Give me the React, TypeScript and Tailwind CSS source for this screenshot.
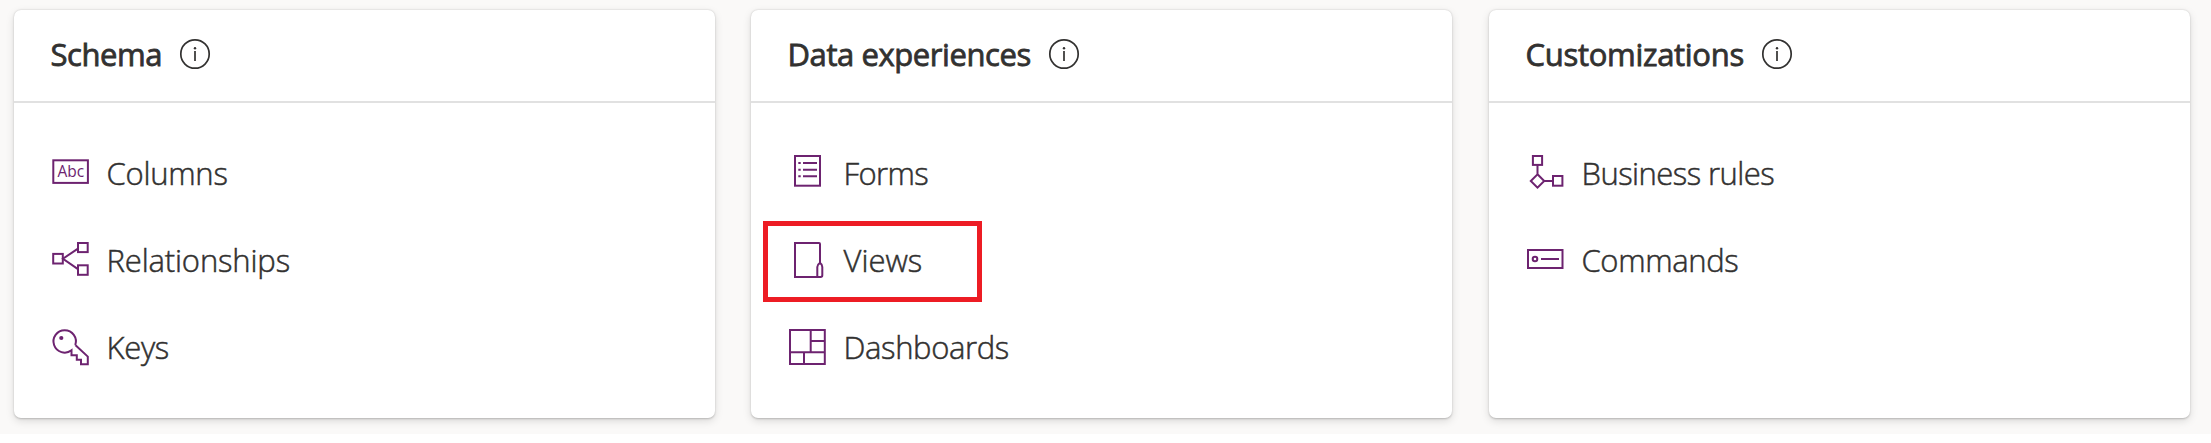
import type { ReactNode } from 'react';

function Icon({ children }: { children: ReactNode }) {
  return (
    <svg
      className="mt-[23px] h-10 w-10 shrink-0 text-[#6d2370]"
      viewBox="0 0 40 40"
      fill="none"
      stroke="currentColor"
      strokeWidth="2"
    >
      {children}
    </svg>
  );
}

function ColumnsIcon() {
  return (
    <Icon>
      <rect x="3.3" y="7.3" width="34.6" height="22.6" />
      <text
        className="font-['Open_Sans',sans-serif] text-[15.5px]"
        x="7.6"
        y="24.4"
        textLength="26.6"
        fill="currentColor"
        stroke="none"
      >
        Abc
      </text>
    </Icon>
  );
}

function RelationshipsIcon() {
  return (
    <Icon>
      <rect x="3.2" y="13.9" width="9.6" height="9.6" />
      <rect x="28" y="3" width="9.7" height="9.1" />
      <rect x="28" y="25.3" width="9.7" height="9.5" />
      <path d="M27.6 8.8 13 18.7l14.6 10.2" />
    </Icon>
  );
}

function KeysIcon() {
  return (
    <Icon>
      <path d="M25.3 18A11.2 11.2 0 1 0 21.5 23.3V28.3H26.8V32.7H31V37.2H37.8V29.6L25.3 18" />
      <circle cx="11.3" cy="11" r="2.1" fill="currentColor" stroke="none" />
    </Icon>
  );
}

function FormsIcon() {
  return (
    <Icon>
      <rect x="8" y="3" width="25" height="29.7" />
      <path d="M11.3 10h2.4M16 10h14M11.3 16.7h2.4M16 16.7h14M11.3 23.3h2.4M16 23.3h14" />
    </Icon>
  );
}

function ViewsIcon() {
  return (
    <Icon>
      <path d="M33 22.8V4a1 1 0 0 0-1-1H8v34h25.6a1.7 1.7 0 0 0 1.7-1.7V27c0-1.7-.9-3.3-2.3-4.2-1.4.9-2.7 2.5-2.7 4.2v10" />
    </Icon>
  );
}

function DashboardsIcon() {
  return (
    <Icon>
      <rect x="3" y="3" width="34.8" height="34" />
      <path d="M23.7 3v22.3M23.7 14h14M3 25.3h34.8M17 25.3V37" />
    </Icon>
  );
}

function BusinessRulesIcon() {
  return (
    <Icon>
      <rect x="7.9" y="3" width="9.2" height="8.9" />
      <path d="M12.5 12v9M19 28h8.5M12.5 21.3 19.2 28l-6.7 6.7L5.8 28z" />
      <rect x="28" y="23" width="9.4" height="9.7" />
    </Icon>
  );
}

function CommandsIcon() {
  return (
    <Icon>
      <rect x="3" y="10" width="34.5" height="18" />
      <circle cx="10" cy="19" r="2.3" />
      <path d="M16 19h18" />
    </Icon>
  );
}

function InfoIcon() {
  return (
    <svg
      className="mt-7 h-8 w-8 shrink-0 text-[#323130]"
      viewBox="0 0 32 32"
      fill="none"
      stroke="currentColor"
      strokeWidth="1.7"
    >
      <circle cx="16" cy="16" r="14.2" />
      <path d="M16 13v10" />
      <circle cx="16" cy="10.2" r="1.2" fill="currentColor" stroke="none" />
    </svg>
  );
}

interface ItemData {
  label: string;
  tracking: string;
  icon: ReactNode;
  highlighted?: boolean;
}

interface CardData {
  title: string;
  tracking: string;
  margin: string;
  items: ItemData[];
}

const cards: CardData[] = [
  {
    title: 'Schema',
    tracking: 'tracking-[-0.45px]',
    margin: 'ml-[14px]',
    items: [
      { label: 'Columns', tracking: 'tracking-[-0.25px]', icon: <ColumnsIcon /> },
      { label: 'Relationships', tracking: 'tracking-[-0.15px]', icon: <RelationshipsIcon /> },
      { label: 'Keys', tracking: 'tracking-[-0.3px]', icon: <KeysIcon /> },
    ],
  },
  {
    title: 'Data experiences',
    tracking: 'tracking-[-0.42px]',
    margin: 'ml-9',
    items: [
      { label: 'Forms', tracking: 'tracking-[-0.6px]', icon: <FormsIcon /> },
      { label: 'Views', tracking: 'tracking-[0px]', icon: <ViewsIcon />, highlighted: true },
      { label: 'Dashboards', tracking: 'tracking-[-0.37px]', icon: <DashboardsIcon /> },
    ],
  },
  {
    title: 'Customizations',
    tracking: 'tracking-[-0.3px]',
    margin: 'ml-[37px]',
    items: [
      { label: 'Business rules', tracking: 'tracking-[-0.54px]', icon: <BusinessRulesIcon /> },
      { label: 'Commands', tracking: 'tracking-[-0.38px]', icon: <CommandsIcon /> },
    ],
  },
];

function Item({ label, tracking, icon, highlighted }: ItemData) {
  return (
    <li className="relative flex h-[87px] items-start">
      {icon}
      <span
        className={`ml-[16.5px] text-[31px] leading-[86px] font-light whitespace-nowrap [-webkit-text-stroke:0.5px_#323130] ${tracking}`}
      >
        {label}
      </span>
      {highlighted && (
        <span className="absolute top-1 -left-6 h-[81px] w-[219px] border-[5px] border-[#ed1c24]" />
      )}
    </li>
  );
}

function Card({ title, tracking, margin, items }: CardData) {
  return (
    <section
      className={`h-[408px] w-[701px] shrink-0 rounded-[7px] bg-white shadow-[0_0.6px_2px_rgba(0,0,0,0.2),0_3px_8px_rgba(0,0,0,0.13)] ${margin}`}
    >
      <header className="flex h-[93px] items-start border-b-2 border-[#e1e1e1] pl-[36.5px]">
        <h2
          className={`text-[31px] leading-[88px] font-normal whitespace-nowrap [-webkit-text-stroke:0.8px_#323130] ${tracking}`}
        >
          {title}
        </h2>
        <span className="ml-[17px] flex">
          <InfoIcon />
        </span>
      </header>
      <ul className="pt-[27px] pl-9">
        {items.map((item) => (
          <Item key={item.label} {...item} />
        ))}
      </ul>
    </section>
  );
}

export default function App() {
  return (
    <div className="h-[443px] w-[2211px] overflow-hidden bg-white font-['Open_Sans','Noto_Sans',sans-serif] text-[#323130]">
      <main className="flex h-[434px] items-start overflow-hidden bg-[#faf9f8] pt-[10px]">
        {cards.map((card) => (
          <Card key={card.title} {...card} />
        ))}
      </main>
    </div>
  );
}
